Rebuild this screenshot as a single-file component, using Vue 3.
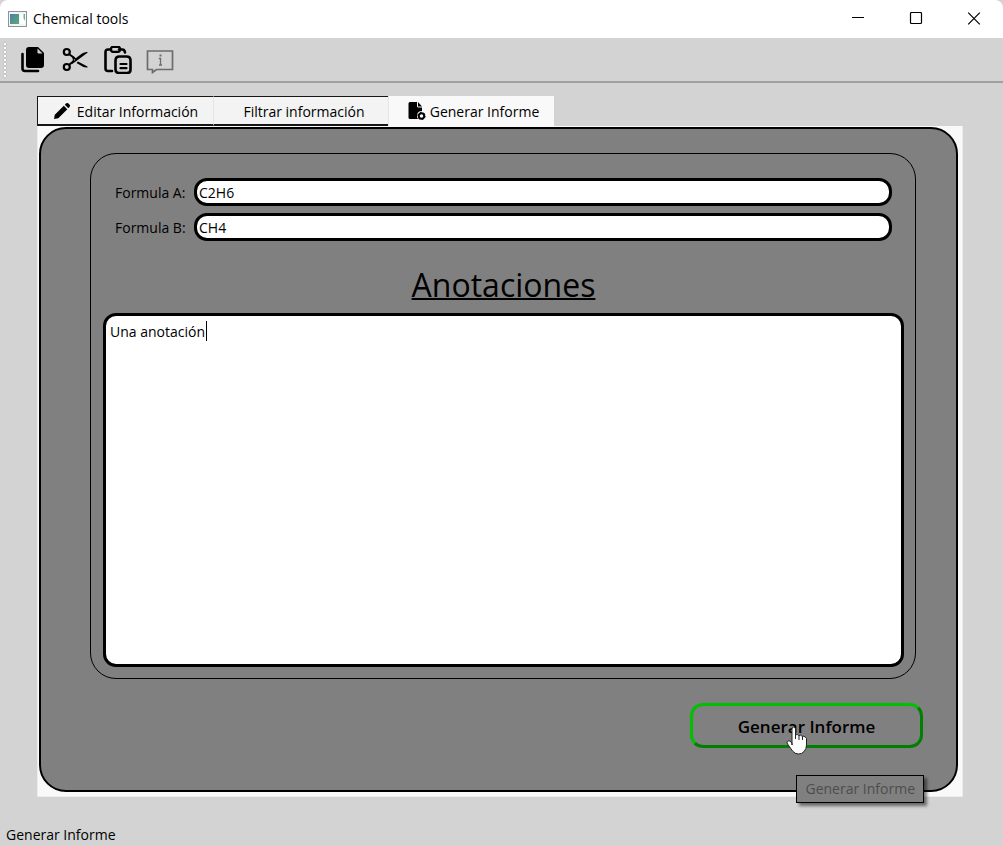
<script setup>
import { ref } from 'vue'

const formulaA = ref('C2H6')
const formulaB = ref('CH4')
const notes = ref('Una anotación')
</script>

<template>
  <div class="window">
    <header class="titlebar">
      <svg class="app-icon" width="19" height="16" viewBox="0 0 19 16" aria-hidden="true">
        <defs>
          <linearGradient id="pane" x1="0" y1="0" x2="1" y2="1">
            <stop offset="0" stop-color="#4a7fa8" />
            <stop offset="1" stop-color="#58ab78" />
          </linearGradient>
        </defs>
        <rect x="0.5" y="0.5" width="18" height="15" fill="#f4f4f4" stroke="#8b9499" />
        <rect x="2" y="3" width="9" height="10" fill="url(#pane)" />
        <rect x="12" y="3" width="5" height="10" fill="#fff" />
        <path d="M15.500 3H17v7l-1.500-3z" fill="#65b98c" />
      </svg>
      <span class="title">Chemical tools</span>
      <div class="controls">
        <button type="button" aria-label="Minimizar">
          <svg width="14" height="14" viewBox="0 0 14 14"><path d="M1 5.500h12" stroke="#000" /></svg>
        </button>
        <button type="button" aria-label="Maximizar">
          <svg width="14" height="14" viewBox="0 0 14 14"><rect x="1.5" y="0.500" width="11" height="11" rx="1" fill="none" stroke="#000" stroke-width="1.2" /></svg>
        </button>
        <button type="button" aria-label="Cerrar">
          <svg width="14" height="14" viewBox="0 0 14 14"><path d="M1.200 .700l11.600 11.600M12.800 .700L1.200 12.300" stroke="#000" stroke-width="1.2" /></svg>
        </button>
      </div>
    </header>

    <div class="toolbar" role="toolbar">
      <span class="grip"></span>
      <button type="button" aria-label="Copiar">
        <svg width="28" height="28" viewBox="0 0 28 28">
          <path d="M2.500 8v14.500q0 2.500 2.500 2.500h13" fill="none" stroke="#000" stroke-width="2.600" stroke-linecap="round" />
          <path d="M9 1h9l6 6v12q0 3-3 3H9q-3 0-3-3V4q0-3 3-3z" fill="#000" />
          <path d="M17.500 2.500v3.700q0 1.400 1.400 1.400H22.500z" fill="#d3d3d3" />
        </svg>
      </button>
      <button type="button" aria-label="Cortar">
        <svg width="28" height="28" viewBox="0 0 28 28">
          <g fill="none" stroke="#000">
            <circle cx="4.800" cy="6" r="3" stroke-width="2.200" />
            <circle cx="4.800" cy="21" r="3" stroke-width="2.200" />
            <path d="M7.500 8.500l5 3.500M7.500 18.500l5-4" stroke-width="2" />
          </g>
          <path d="M10 15L20 7.500q3-2 5.500-1.500v.800L13 16l-3 2zM9.500 9.500l4.500 3-2.500 3zM16 15.500l9.500 5v.900q-2.500.500-5-1L14.500 17z" fill="#000" />
          <circle cx="12.500" cy="13.800" r="0.600" fill="#d3d3d3" />
        </svg>
      </button>
      <button type="button" aria-label="Pegar">
        <svg width="28" height="28" viewBox="0 0 28 28">
          <g fill="none" stroke="#000" stroke-width="2.600" stroke-linecap="round" stroke-linejoin="round">
            <path d="M7 3.500H4Q1.500 3.500 1.500 6v16.500Q1.500 25 4 25h4M15 3.500h3.500q2 0 2.500 3" />
            <rect x="7" y="0.800" width="9" height="5" rx="2" stroke-width="2.200" />
            <path d="M15.500 10.500h7q4 0 4 4v9q0 3.500-3.500 3.500h-8q-3.500 0-3.500-3.500v-9q0-4 4-4z" />
            <path d="M16.500 18h6M16.500 22.200h6" stroke-width="2.200" />
          </g>
        </svg>
      </button>
      <button type="button" aria-label="Información" disabled>
        <svg width="28" height="28" viewBox="0 0 28 28">
          <path d="M1.500 5h25v18.500H10.500L6.500 26.500v-3h-5z" fill="none" stroke="#6c6c6c" stroke-width="1.700" />
          <path d="M12.800 12.500h1.700v6.500M13 19h3" fill="none" stroke="#6c6c6c" stroke-width="1.300" />
          <rect x="13.500" y="8.500" width="2" height="2" fill="#6c6c6c" />
        </svg>
      </button>
    </div>

    <main class="workspace">
      <div class="tabs" role="tablist">
        <button class="tab first" type="button" role="tab" aria-selected="false">
          <svg width="18" height="18" viewBox="0 0 18 18">
            <path d="M1 17l.8-4.300L10.800 3.700l3.500 3.500L5.300 16.200z" fill="#000" />
            <path d="M11.800 2.700l1.400-1.400q1-.8 2 0l1.500 1.500q.8 1 0 2l-1.400 1.400z" fill="#000" />
          </svg>
          <span>Editar Información</span>
        </button>
        <button class="tab second" type="button" role="tab" aria-selected="false"><span>Filtrar información</span></button>
        <button class="tab active" type="button" role="tab" aria-selected="true">
          <svg width="18" height="18" viewBox="0 0 18 18">
            <path d="M2 0h7v4q0 1.500 1.500 1.500H14V9q-5 0-5 5 0 2 1 3H2Q.500 17 .500 15.500v-14Q.500 0 2 0z" fill="#000" />
            <path d="M10 0l4 4.500h-4z" fill="#000" />
            <circle cx="13.500" cy="14" r="2.700" fill="none" stroke="#000" stroke-width="1.900" />
            <circle cx="13.500" cy="14" r="3.700" fill="none" stroke="#000" stroke-dasharray="1.600 2.275" />
          </svg>
          <span>Generar Informe</span>
        </button>
      </div>

      <section class="pane">
        <form class="panel" @submit.prevent>
          <div class="group">
            <div class="fields">
              <label for="formula-a">Formula A:</label>
              <input id="formula-a" v-model="formulaA" type="text" />
              <label for="formula-b">Formula B:</label>
              <input id="formula-b" v-model="formulaB" type="text" />
            </div>
            <label class="heading" for="notes">Anotaciones</label>
            <div class="notes">
              <textarea id="notes" v-model="notes" spellcheck="false"></textarea>
              <span class="caret"></span>
            </div>
          </div>
          <div class="actions">
            <div class="anchor">
              <button class="submit" type="submit">Generar Informe</button>
              <svg class="pointer" width="22" height="30" viewBox="0 0 22 30" aria-hidden="true">
                <path d="M6 19V3q0-2 1.700-2T9.500 3v6q1.800-1.500 3.300.6 2-1.200 3.400.8 1.800-.8 3.200.8l1.100 1.300V19q0 4-2.500 6.500Q16 28 12.500 28q-3.500 0-6-3L1.500 18q-1.500-2.500.5-3.200 1.800-.5 4 2.200z" fill="#fff" stroke="#222" />
                <path d="M9.500 8v5M13 9.500V14M16.500 10.500V14" stroke="#222" fill="none" />
              </svg>
              <div class="tooltip" role="tooltip">Generar Informe</div>
            </div>
          </div>
        </form>
      </section>
    </main>

    <footer class="status">Generar Informe</footer>
  </div>
</template>

<style>
body {
  margin: 0;
  background: #d3d3d3;
}
</style>

<style scoped>
.window {
  box-sizing: border-box;
  min-height: 100vh;
  display: flex;
  flex-direction: column;
  background: #d3d3d3;
  color: #000;
  font: 14px/20px "Open Sans", "Noto Sans", sans-serif;
}
button,
input,
textarea {
  box-sizing: border-box;
  margin: 0;
  font: inherit;
  color: inherit;
}
button {
  padding: 0;
  border: 0;
  background: none;
}
svg {
  display: block;
  flex: none;
}
.titlebar {
  height: 38px;
  display: flex;
  align-items: center;
  padding-left: 8px;
  background: #fff;
  border-radius: 8px 8px 0 0;
}
.app-icon {
  margin-right: 6px;
}
.controls {
  display: flex;
  align-self: stretch;
  margin-left: auto;
}
.controls button {
  width: 58px;
  display: flex;
  align-items: center;
  justify-content: center;
}
.toolbar {
  height: 43px;
  display: flex;
  align-items: center;
  gap: 14px;
  border-bottom: 2px solid #a0a0a0;
}
.grip {
  width: 4px;
  height: 36px;
  margin-left: 3px;
  margin-right: -1px;
  background: radial-gradient(circle at 2px 2px, #fff 1px, #b0b0b0 1px, transparent 2px) 0 0 / 4px 4px;
}
.workspace {
  flex: 1;
  display: flex;
  flex-direction: column;
  padding: 13px 40px 0 37px;
}
.tabs {
  display: flex;
  height: 30px;
}
.tab {
  box-sizing: border-box;
  display: flex;
  align-items: center;
  justify-content: center;
  gap: 6px;
  background: #f3f3f3;
  border-top: 1px solid #161616;
  border-bottom: 2px solid #161616;
}
.tab span {
  padding-top: 2px;
}
.first {
  width: 177px;
  border-left: 1px solid #161616;
  border-right: 1px solid #e5e5e5;
}
.second {
  width: 174px;
  padding-left: 6px;
}
.active {
  width: 166px;
  gap: 4px;
  padding-left: 4px;
  background: #f9f9f9;
  border: 0;
  border-left: 1px solid #e5e5e5;
}
.pane {
  flex: 1;
  display: flex;
  padding: 1px 4px 4px 1px;
  background: #f9f9f9;
  border: 1px solid #ececec;
  border-top: 0;
}
.panel {
  flex: 1;
  display: flex;
  flex-direction: column;
  padding: 24px 33px 42px 49px;
  background: #808080;
  border: 2px solid #000;
  border-radius: 27px;
}
.group {
  flex: 1;
  display: flex;
  flex-direction: column;
  margin-right: 7px;
  padding: 24px 11px 11px 12px;
  border: 1px solid #000;
  border-radius: 26px;
}
.fields {
  display: grid;
  grid-template-columns: 72px 1fr;
  gap: 7px;
  align-items: center;
  padding: 0 12px;
}
.fields label {
  padding-top: 1px;
}
.fields input {
  width: 100%;
  min-width: 0;
  height: 28px;
  padding: 0 2px;
  background: #fff;
  border: 3px solid #000;
  border-radius: 13px;
  outline: 0;
}
.heading {
  align-self: center;
  margin: 22px 0 6px;
  font-size: 32px;
  line-height: 44px;
  text-decoration: underline;
  text-decoration-thickness: 2px;
}
.notes {
  position: relative;
  flex: 1;
  display: flex;
}
.notes textarea {
  flex: 1;
  min-height: 200px;
  padding: 6px 4px;
  background: #fff;
  border: 3px solid #000;
  border-radius: 13px;
  outline: 0;
  resize: none;
}
.caret {
  position: absolute;
  top: 8px;
  left: 103px;
  width: 1px;
  height: 20px;
  background: #000;
}
.actions {
  display: flex;
  justify-content: flex-end;
  margin-top: 24px;
}
.anchor {
  position: relative;
}
.submit {
  display: block;
  width: 233px;
  height: 45px;
  padding-top: 2px;
  border: 3px solid;
  border-color: #00c000 #008000 #008000 #00c000;
  border-radius: 13px;
  font-size: 17px;
  font-weight: 600;
}
.pointer {
  position: absolute;
  left: 96px;
  top: 23px;
}
.tooltip {
  position: absolute;
  top: 72px;
  right: -1px;
  padding: 3px 8px;
  white-space: nowrap;
  color: #4d4d4d;
  background: #808080;
  border: 1px solid #000;
  box-shadow: 3px 3px 3px rgba(0, 0, 0, 0.5);
}
.status {
  padding: 28px 6px 1px;
}
</style>
